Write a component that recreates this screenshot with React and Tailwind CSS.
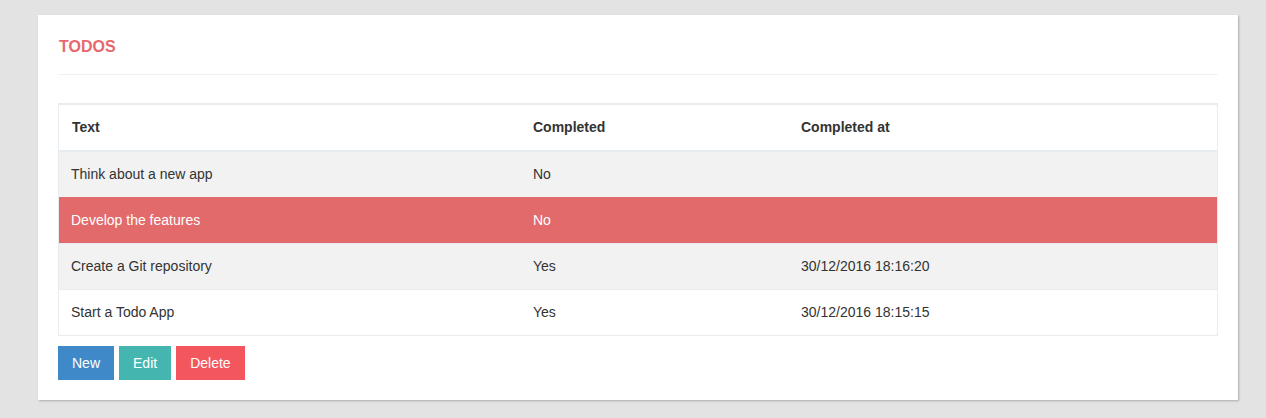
import React from "react";

const todos = [
  { text: "Think about a new app", completed: "No", at: "" },
  { text: "Develop the features", completed: "No", at: "", selected: true },
  { text: "Create a Git repository", completed: "Yes", at: "30/12/2016 18:16:20" },
  { text: "Start a Todo App", completed: "Yes", at: "30/12/2016 18:15:15" },
];

function App() {
  return (
    <div
      className="min-h-[418px] bg-[#e3e3e3] pt-[15px] pl-[38px]"
      style={{ fontFamily: '"Liberation Sans", Arial, sans-serif' }}
    >
      <div className="w-[1200px] bg-white px-[20px] pt-[22px] pb-[20px] shadow-[1px_1px_2px_rgba(0,0,0,0.25)]">
        <div className="border-b border-[#eef1f5] pb-[17px]">
          <h1 className="text-[16px] font-bold uppercase leading-[20px] text-[#e7686c] pl-[1px]">
            Todos
          </h1>
        </div>

        <div className="mt-[28px] border border-[#e7ecf1] border-t-2">
          <table className="w-full text-[14px] text-[#333] border-collapse">
            <thead>
              <tr className="border-b-2 border-[#e7ecf1] text-left">
                <th className="h-[46px] w-[461px] px-[13px] font-bold">Text</th>
                <th className="w-[268px] px-[13px] font-bold">Completed</th>
                <th className="px-[13px] font-bold">Completed at</th>
              </tr>
            </thead>
            <tbody>
              {todos.map((t, i) => (
                <tr
                  key={i}
                  className={
                    t.selected
                      ? "bg-[#e26a6a] text-white border-t border-[#e26a6a]"
                      : i % 2 === 0
                      ? "bg-[#f2f2f2] border-t border-[#e7ecf1]"
                      : "bg-white border-t border-[#e7ecf1]"
                  }
                >
                  <td className="h-[46px] px-[12px]">{t.text}</td>
                  <td className="px-[13px]">{t.completed}</td>
                  <td className="px-[13px]">{t.at}</td>
                </tr>
              ))}
            </tbody>
          </table>
        </div>

        <div className="mt-[10px] flex gap-[5px]">
          <button className="h-[34px] px-[14px] bg-[#3f89c9] text-white text-[14px]">
            New
          </button>
          <button className="h-[34px] px-[14px] bg-[#45b6af] text-white text-[14px]">
            Edit
          </button>
          <button className="h-[34px] px-[14px] bg-[#f3565d] text-white text-[14px]">
            Delete
          </button>
        </div>
      </div>
    </div>
  );
}

export default App;
